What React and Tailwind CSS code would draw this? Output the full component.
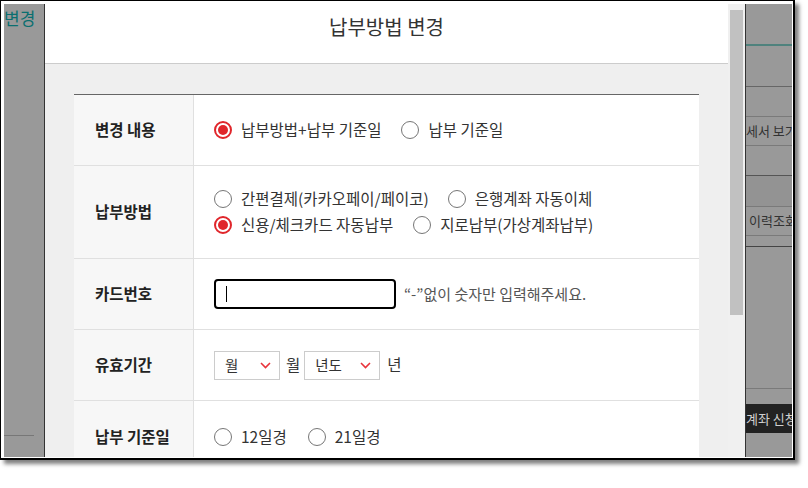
import React from "react";

function Radio({ checked, label }) {
  return (
    <span className="flex items-center">
      {checked ? (
        <span className="w-[18px] h-[18px] rounded-full border-2 border-[#e0262b] bg-white flex items-center justify-center shrink-0">
          <span className="w-[10px] h-[10px] rounded-full bg-[#e0262b]" />
        </span>
      ) : (
        <span className="w-[18px] h-[18px] rounded-full border-[1.5px] border-[#767676] bg-white shrink-0" />
      )}
      <span className="ml-[9px] whitespace-nowrap">{label}</span>
    </span>
  );
}

function Chevron() {
  return (
    <svg width="11" height="7" viewBox="0 0 11 7" className="shrink-0">
      <polyline points="1,1 5.5,5.5 10,1" fill="none" stroke="#e8333a" strokeWidth="1.6" />
    </svg>
  );
}

function Select({ label, width }) {
  return (
    <div
      className={`h-[29px] border border-[#cccccc] bg-white flex items-center justify-between pl-[10px] pr-[8px] ${width}`}
    >
      <span className="text-[14.5px]">{label}</span>
      <Chevron />
    </div>
  );
}

function Row({ label, h, children, last }) {
  return (
    <div className={`flex ${h} ${last ? "" : "border-b border-[#e0e0e0]"}`}>
      <div className="w-[120px] shrink-0 bg-[#f7f7f7] border-r border-[#e0e0e0] flex items-center pl-[21px] font-bold text-[15.5px] text-[#222]">
        {label}
      </div>
      <div className="flex-1 bg-white flex items-center pl-[20px]">{children}</div>
    </div>
  );
}

export default function App() {
  return (
    <div className="w-[808px] h-[488px] bg-white font-['Noto_Sans_CJK_KR','Noto_Sans',sans-serif] text-[#333]">
      <div className="w-[795px] h-[460px] border-l border-t border-r-2 border-b-2 border-black pl-[3px] pt-[3px] pr-[1px] pb-[1px] bg-white shadow-[4px_4px_4px_rgba(0,0,0,0.5)]">
        <div className="flex w-[788px] h-[453px] bg-[#999999] overflow-hidden">
          {/* left strip */}
          <div className="w-[40px] shrink-0 flex flex-col overflow-hidden">
            <div className="text-[17px] leading-[24px] text-[#0b6f70] whitespace-nowrap pt-[2px]">변경</div>
            <div className="flex-1" />
            <div className="w-[30px] border-b border-[#777] mb-[21px]" />
          </div>

          {/* modal */}
          <div className="w-[702px] shrink-0 flex border-x border-[#333]">
            <div className="w-[683px] flex flex-col">
              <div className="h-[60px] shrink-0 bg-white border-b border-[#cccccc] flex justify-center pt-[9px] text-[20px] leading-[28px] text-[#333]">
                납부방법 변경
              </div>
              <div className="flex-1 bg-[#efefef] pt-[30px] px-[29px] overflow-hidden">
                <div className="border-t border-[#666] text-[15.5px] text-[#333]">
                  <Row label="변경 내용" h="h-[71px]">
                    <div className="flex items-center gap-[20px]">
                      <Radio checked label="납부방법+납부 기준일" />
                      <Radio label="납부 기준일" />
                    </div>
                  </Row>
                  <Row label="납부방법" h="h-[93px]">
                    <div className="flex flex-col">
                      <div className="h-[26px] flex items-center gap-[19px]">
                        <Radio label="간편결제(카카오페이/페이코)" />
                        <Radio label="은행계좌 자동이체" />
                      </div>
                      <div className="h-[26px] flex items-center gap-[20px]">
                        <Radio checked label="신용/체크카드 자동납부" />
                        <Radio label="지로납부(가상계좌납부)" />
                      </div>
                    </div>
                  </Row>
                  <Row label="카드번호" h="h-[71px]">
                    <div className="flex items-center">
                      <div className="w-[182px] h-[30px] border-2 border-black rounded-[4px] bg-white flex items-center pl-[10px]">
                        <div className="w-[1px] h-[16px] bg-black" />
                      </div>
                      <span className="ml-[8px] text-[15px] text-[#555] whitespace-nowrap">“-”없이 숫자만 입력해주세요.</span>
                    </div>
                  </Row>
                  <Row label="유효기간" h="h-[71px]">
                    <div className="flex items-center">
                      <Select label="월" width="w-[66px]" />
                      <span className="ml-[6px] mr-[4px]">월</span>
                      <Select label="년도" width="w-[76px]" />
                      <span className="ml-[7px]">년</span>
                    </div>
                  </Row>
                  <Row label="납부 기준일" h="h-[71px]" last>
                    <div className="flex items-center gap-[21px]">
                      <Radio label="12일경" />
                      <Radio label="21일경" />
                    </div>
                  </Row>
                </div>
              </div>
            </div>
            {/* scrollbar */}
            <div className="w-[17px] shrink-0 bg-[#f0f0f0] pt-[6px] px-[2px]">
              <div className="h-[305px] bg-[#c1c1c1]" />
            </div>
          </div>

          {/* right strip */}
          <div className="flex-1 flex flex-col overflow-hidden text-[13px] text-[#333] whitespace-nowrap">
            <div className="h-[40px] shrink-0" />
            <div className="h-[2px] shrink-0 bg-[#4f827d]" />
            <div className="h-[41px] shrink-0 border-b border-[#666]" />
            <div className="h-[30px] shrink-0 border-b border-[#7a7a7a]" />
            <div className="h-[29px] shrink-0 border-b border-[#7a7a7a] flex items-center">세서 보기</div>
            <div className="h-[30px] shrink-0 border-b border-[#555]" />
            <div className="h-[31px] shrink-0 border-b border-[#7a7a7a] bg-[#939393]" />
            <div className="h-[29px] shrink-0 border-b border-[#7a7a7a] flex items-center pl-[3px]">이력조회</div>
            <div className="h-[11px] shrink-0 border-b border-[#444]" />
            <div className="h-[142px] shrink-0 border-b border-[#7a7a7a]" />
            <div className="h-[15px] shrink-0" />
            <div className="h-[29px] shrink-0 bg-[#222] text-[#cfcfcf] flex items-center">계좌 신청</div>
            <div className="flex-1" />
          </div>
        </div>
      </div>
    </div>
  );
}
